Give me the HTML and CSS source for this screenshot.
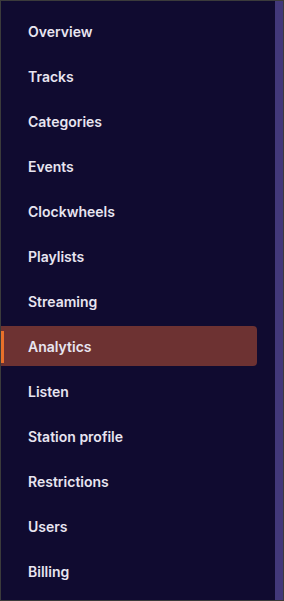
FILE: index.html
```html
<!DOCTYPE html>
<html lang="en">
<head>
    <meta charset="UTF-8">
    <meta name="viewport" content="width=device-width, initial-scale=1.0">
    <title>Station menu</title>
    <link rel="stylesheet" href="styles.css">
</head>
<body>

    <div class="frame">
        <nav class="side-nav">
            <a class="nav-item" href="#">Overview</a>
            <a class="nav-item" href="#">Tracks</a>
            <a class="nav-item" href="#">Categories</a>
            <a class="nav-item" href="#">Events</a>
            <a class="nav-item" href="#">Clockwheels</a>
            <a class="nav-item" href="#">Playlists</a>
            <a class="nav-item" href="#">Streaming</a>
            <a class="nav-item active" href="#">Analytics</a>
            <a class="nav-item" href="#">Listen</a>
            <a class="nav-item" href="#">Station profile</a>
            <a class="nav-item" href="#">Restrictions</a>
            <a class="nav-item" href="#">Users</a>
            <a class="nav-item" href="#">Billing</a>
        </nav>
        <div class="scrollbar"></div>
    </div>

</body>
</html>
```

FILE: styles.css
```css
html, body {
    margin: 0;
    padding: 0;
}

body {
    font-family: Inter, "Noto Sans", sans-serif;
    background-color: #100b30;
}

.frame {
    box-sizing: border-box;
    width: 284px;
    height: 601px;
    border: 1px solid #3b3b3b;
    display: flex;
    overflow: hidden;
    background-color: #100b30;
}

.side-nav {
    flex: 1;
    display: flex;
    flex-direction: column;
    gap: 5px;
    padding: 10px 18px 0 0;
}

.nav-item {
    position: relative;
    display: flex;
    align-items: center;
    flex-shrink: 0;
    height: 40px;
    padding-left: 27px;
    color: #e8e5f0;
    font-size: 14px;
    font-weight: 600;
    text-decoration: none;
    border-radius: 0 4px 4px 0;
}

.nav-item.active {
    background-color: #6d3232;
}

.nav-item.active::before {
    content: "";
    position: absolute;
    left: 0;
    top: 5px;
    bottom: 3px;
    width: 3px;
    background-color: #e8702a;
}

.scrollbar {
    width: 8px;
    background-color: #42387a;
}
```
